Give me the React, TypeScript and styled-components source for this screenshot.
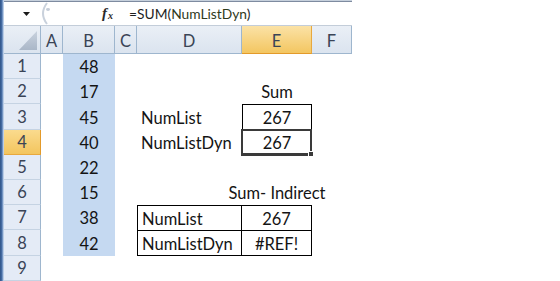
import React from "react";
import styled, { createGlobalStyle, css } from "styled-components";

const GlobalStyle = createGlobalStyle`
  html, body { margin: 0; padding: 0; background: #ffffff; }
  #root { width: 560px; height: 281px; }
`;

const FONT = `"Lato", "Liberation Sans", sans-serif`;

const Frame = styled.div`
  width: 560px;
  height: 281px;
  overflow: hidden;
  display: flex;
  background: #ffffff;
  font-family: ${FONT};
`;

const Edge = styled.div`
  width: 4px;
  flex: none;
  background: linear-gradient(90deg, #2f5387 0, #4a71a8 50%, #9db8dc 75%, #d7e2f0 100%);
`;

const Main = styled.div`
  width: 348px;
  display: flex;
  flex-direction: column;
`;

const TopStrip = styled.div`
  height: 3px;
  background: #c6d0dc;
  border-bottom: 1px solid #7e8ba0;
`;

const FormulaBar = styled.div`
  height: 23px;
  display: flex;
  align-items: center;
  background: #ffffff;
  border-bottom: 1px solid #c3cdd9;
`;

const NameBox = styled.div`
  width: 34px;
  height: 100%;
  display: flex;
  align-items: center;
  justify-content: flex-end;
  padding-right: 8px;
  box-sizing: border-box;
`;

const Splitter = styled.svg`
  width: 14px;
  height: 23px;
  flex: none;
`;

const FxBox = styled.div`
  width: 74px;
  height: 100%;
  display: flex;
  align-items: center;
  justify-content: flex-end;
  padding-right: 13px;
  box-sizing: border-box;
  font-family: "Liberation Serif", serif;
  font-style: italic;
  font-weight: bold;
  color: #2b2b2b;
  font-size: 15px;
`;

const FxSub = styled.span`
  font-size: 10px;
  margin-left: 1px;
  position: relative;
  top: 2px;
`;

const FormulaText = styled.div`
  font-family: ${FONT};
  font-size: 13.8px;
  color: #1e1e1e;
  padding-left: 3px;
  white-space: nowrap;
`;

const Ref = styled.span`
  color: #2f3a1c;
`;

const Grid = styled.div`
  display: grid;
  grid-template-columns: 37px 22px 52px 22px 105px 70px 40px;
  grid-template-rows: 28px 25px 25px 26px 25px 25px 25px 25px 26px 25px;
`;

const headBase = css`
  display: flex;
  align-items: center;
  justify-content: center;
  box-sizing: border-box;
  font-size: 16.5px;
  color: #3a4456;
`;

const Corner = styled.div`
  ${headBase};
  position: relative;
  background: linear-gradient(#eaeff6, #dbe4ef);
  border-right: 1px solid #9eb6ce;
  border-bottom: 1px solid #9eb6ce;
`;

const SelectAll = styled.svg`
  position: absolute;
  right: 3px;
  bottom: 3px;
  width: 18px;
  height: 19px;
`;

const ColHead = styled.div<{ $active?: boolean }>`
  ${headBase};
  padding-top: 2px;
  background: ${(p) =>
    p.$active ? "linear-gradient(#fbe2a6, #f3c661)" : "linear-gradient(#eaeff6, #dbe4ef)"};
  border-right: 1px solid ${(p) => (p.$active ? "#e8a83e" : "#9eb6ce")};
  border-bottom: 1px solid ${(p) => (p.$active ? "#e39a2a" : "#9eb6ce")};
`;

const RowHead = styled.div<{ $active?: boolean }>`
  ${headBase};
  background: ${(p) =>
    p.$active ? "linear-gradient(#fadb8e, #f3c55e)" : "#e4ebf6"};
  border-right: 1px solid ${(p) => (p.$active ? "#e39a2a" : "#9eb6ce")};
  border-bottom: 1px solid ${(p) => (p.$active ? "#e8a83e" : "#c5d3e3")};
`;

type Borders = { t?: boolean; b?: boolean; l?: boolean; r?: boolean };

const Cell = styled.div<{ $align?: "left" | "center"; $fill?: boolean; $bd?: Borders }>`
  position: relative;
  display: flex;
  align-items: center;
  justify-content: ${(p) => (p.$align === "left" ? "flex-start" : "center")};
  padding-left: ${(p) => (p.$align === "left" ? "4px" : "0")};
  padding-top: 1px;
  box-sizing: border-box;
  white-space: nowrap;
  font-size: 16.5px;
  color: #141414;
  background: ${(p) => (p.$fill ? "#c5d9f1" : "transparent")};
  border-top: ${(p) => (p.$bd?.t ? "1px solid #000" : "none")};
  border-bottom: ${(p) => (p.$bd?.b ? "1px solid #000" : "none")};
  border-left: ${(p) => (p.$bd?.l ? "1px solid #000" : "none")};
  border-right: ${(p) => (p.$bd?.r ? "1px solid #000" : "none")};
`;

const Selection = styled.div`
  position: absolute;
  top: -2px;
  left: -2px;
  right: -1px;
  bottom: -2px;
  border: 2px solid #3a3a3a;
  border-bottom-width: 3px;
  pointer-events: none;
`;

const FillHandle = styled.div`
  position: absolute;
  right: -4px;
  bottom: -4px;
  width: 4px;
  height: 4px;
  background: #3a3a3a;
  border: 1px solid #ffffff;
`;

type CellSpec = { text?: string; align?: "left" | "center"; bd?: Borders; fill?: boolean; sel?: boolean };

const cols = ["A", "B", "C", "D", "E", "F"];
const bValues = ["48", "17", "45", "40", "22", "15", "38", "42"];

const all: Borders = { t: true, b: true, l: true, r: true };

const special: Record<string, CellSpec> = {
  E2: { text: "Sum" },
  D3: { text: "NumList", align: "left" },
  E3: { text: "267", bd: all },
  D4: { text: "NumListDyn", align: "left" },
  E4: { text: "267", bd: all, sel: true },
  E6: { text: "Sum- Indirect" },
  D7: { text: "NumList", align: "left", bd: { t: true, l: true, r: true } },
  E7: { text: "267", bd: { t: true, r: true } },
  D8: { text: "NumListDyn", align: "left", bd: all },
  E8: { text: "#REF!", bd: { t: true, b: true, r: true } },
};

export default function App() {
  const rows = [1, 2, 3, 4, 5, 6, 7, 8, 9];
  return (
    <>
      <GlobalStyle />
      <Frame>
        <Edge />
        <Main>
          <TopStrip />
          <FormulaBar>
            <NameBox>
              <svg width="7" height="4" viewBox="0 0 7 4">
                <path d="M0 0 H7 L3.5 4 Z" fill="#1a1a1a" />
              </svg>
            </NameBox>
            <Splitter viewBox="0 0 14 23">
              <path d="M9 1 Q1 11.5 9 22" fill="none" stroke="#c9d1dc" strokeWidth="2" />
              <ellipse cx="10" cy="7.5" rx="2" ry="1.4" fill="#c5cdd8" />
            </Splitter>
            <FxBox>
              f<FxSub>x</FxSub>
            </FxBox>
            <FormulaText>
              =SUM(<Ref>NumListDyn</Ref>)
            </FormulaText>
          </FormulaBar>
          <Grid>
            <Corner>
              <SelectAll viewBox="0 0 18 19">
                <defs>
                  <linearGradient id="sa" x1="0" y1="0" x2="0" y2="1">
                    <stop offset="0" stopColor="#c9d2de" />
                    <stop offset="1" stopColor="#aab7c8" />
                  </linearGradient>
                </defs>
                <path d="M18 0 V19 H0 Z" fill="url(#sa)" />
              </SelectAll>
            </Corner>
            {cols.map((c) => (
              <ColHead key={c} $active={c === "E"}>
                {c}
              </ColHead>
            ))}
            {rows.map((r) => (
              <React.Fragment key={r}>
                <RowHead $active={r === 4}>{r}</RowHead>
                {cols.map((c) => {
                  const id = `${c}${r}`;
                  const spec: CellSpec = special[id] ?? {};
                  const isB = c === "B" && r <= 8;
                  const text = isB ? bValues[r - 1] : spec.text;
                  return (
                    <Cell key={id} $align={spec.align} $bd={spec.bd} $fill={isB}>
                      {text}
                      {spec.sel && (
                        <Selection>
                          <FillHandle />
                        </Selection>
                      )}
                    </Cell>
                  );
                })}
              </React.Fragment>
            ))}
          </Grid>
        </Main>
      </Frame>
    </>
  );
}
